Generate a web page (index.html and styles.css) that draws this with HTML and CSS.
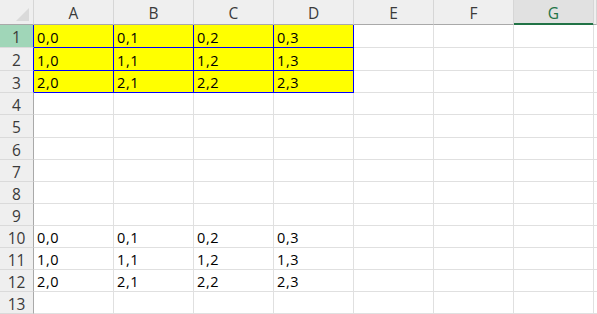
FILE: index.html
```html
<!DOCTYPE html>
<html lang="en">
<head>
    <meta charset="UTF-8">
    <meta name="viewport" content="width=device-width, initial-scale=1.0">
    <title>Sheet1</title>
    <link rel="stylesheet" href="styles.css">
</head>
<body>
    <div class="sheet">
        <div class="row head">
            <div class="corner">
                <svg width="14" height="14" viewBox="0 0 14 14"><polygon points="0,14 13,1 13,14" fill="#dadada"/></svg>
            </div>
            <div class="col">A</div>
            <div class="col">B</div>
            <div class="col">C</div>
            <div class="col">D</div>
            <div class="col">E</div>
            <div class="col">F</div>
            <div class="col sel">G</div>
            <div class="col"></div>
        </div>

        <!-- highlighted block -->
        <div class="row tall">
            <div class="num active edge">1</div>
            <div class="cell hl">0,0</div><div class="cell hl">0,1</div><div class="cell hl">0,2</div><div class="cell hl">0,3</div>
            <div class="cell"></div><div class="cell"></div><div class="cell"></div><div class="cell"></div>
        </div>
        <div class="row tall">
            <div class="num edge">2</div>
            <div class="cell hl">1,0</div><div class="cell hl">1,1</div><div class="cell hl">1,2</div><div class="cell hl">1,3</div>
            <div class="cell"></div><div class="cell"></div><div class="cell"></div><div class="cell"></div>
        </div>
        <div class="row">
            <div class="num edge">3</div>
            <div class="cell hl">2,0</div><div class="cell hl">2,1</div><div class="cell hl">2,2</div><div class="cell hl">2,3</div>
            <div class="cell"></div><div class="cell"></div><div class="cell"></div><div class="cell"></div>
        </div>

        <!-- empty rows -->
        <div class="row">
            <div class="num">4</div>
            <div class="cell"></div><div class="cell"></div><div class="cell"></div><div class="cell"></div>
            <div class="cell"></div><div class="cell"></div><div class="cell"></div><div class="cell"></div>
        </div>
        <div class="row tall">
            <div class="num">5</div>
            <div class="cell"></div><div class="cell"></div><div class="cell"></div><div class="cell"></div>
            <div class="cell"></div><div class="cell"></div><div class="cell"></div><div class="cell"></div>
        </div>
        <div class="row">
            <div class="num">6</div>
            <div class="cell"></div><div class="cell"></div><div class="cell"></div><div class="cell"></div>
            <div class="cell"></div><div class="cell"></div><div class="cell"></div><div class="cell"></div>
        </div>
        <div class="row">
            <div class="num">7</div>
            <div class="cell"></div><div class="cell"></div><div class="cell"></div><div class="cell"></div>
            <div class="cell"></div><div class="cell"></div><div class="cell"></div><div class="cell"></div>
        </div>
        <div class="row">
            <div class="num">8</div>
            <div class="cell"></div><div class="cell"></div><div class="cell"></div><div class="cell"></div>
            <div class="cell"></div><div class="cell"></div><div class="cell"></div><div class="cell"></div>
        </div>
        <div class="row">
            <div class="num">9</div>
            <div class="cell"></div><div class="cell"></div><div class="cell"></div><div class="cell"></div>
            <div class="cell"></div><div class="cell"></div><div class="cell"></div><div class="cell"></div>
        </div>

        <!-- plain copy -->
        <div class="row">
            <div class="num">10</div>
            <div class="cell">0,0</div><div class="cell">0,1</div><div class="cell">0,2</div><div class="cell">0,3</div>
            <div class="cell"></div><div class="cell"></div><div class="cell"></div><div class="cell"></div>
        </div>
        <div class="row">
            <div class="num">11</div>
            <div class="cell">1,0</div><div class="cell">1,1</div><div class="cell">1,2</div><div class="cell">1,3</div>
            <div class="cell"></div><div class="cell"></div><div class="cell"></div><div class="cell"></div>
        </div>
        <div class="row">
            <div class="num">12</div>
            <div class="cell">2,0</div><div class="cell">2,1</div><div class="cell">2,2</div><div class="cell">2,3</div>
            <div class="cell"></div><div class="cell"></div><div class="cell"></div><div class="cell"></div>
        </div>
        <div class="row">
            <div class="num">13</div>
            <div class="cell"></div><div class="cell"></div><div class="cell"></div><div class="cell"></div>
            <div class="cell"></div><div class="cell"></div><div class="cell"></div><div class="cell"></div>
        </div>
    </div>
</body>
</html>
```

FILE: styles.css
```css
body {
    margin: 0;
    padding: 0;
    background-color: #ffffff;
    font-family: 'Open Sans', 'Liberation Sans', sans-serif;
    overflow: hidden;
}
.sheet {
    width: 597px;
}
.row {
    display: grid;
    grid-template-columns: 34px repeat(7, 80px) 1fr;
    height: 22px;
}
.row.tall {
    height: 23px;
}
.row.head {
    height: 25px;
}
.row > div {
    box-sizing: border-box;
    overflow: hidden;
    white-space: nowrap;
}
.corner {
    background-color: #efefef;
    border-right: 1px solid #d6d6d6;
    border-bottom: 1px solid #a9a9a9;
    display: flex;
    justify-content: flex-end;
    align-items: flex-end;
    padding: 0 3px 3px 0;
}
.col {
    background-color: #efefef;
    border-right: 1px solid #d6d6d6;
    border-bottom: 1px solid #a9a9a9;
    color: #3a3a3a;
    font-size: 15.5px;
    display: flex;
    align-items: center;
    justify-content: center;
    padding-top: 2px;
}
.col.sel {
    background-color: #e1e1e1;
    color: #217346;
    border-bottom-color: #217346;
    box-shadow: inset 0 -1px 0 #217346;
}
.num {
    background-color: #efefef;
    border-right: 1px solid #a9a9a9;
    border-bottom: 1px solid #dadada;
    color: #3a3a3a;
    font-size: 15.5px;
    display: flex;
    align-items: center;
    justify-content: center;
    padding-top: 2px;
}
.num.active {
    background-color: #a0d6b8;
}
.num.edge {
    border-right-color: #0000ff;
}
.cell {
    border-right: 1px solid #e0e0e0;
    border-bottom: 1px solid #e0e0e0;
    color: #000000;
    font-size: 14.5px;
    letter-spacing: 0.6px;
    display: flex;
    align-items: center;
    padding: 2px 0 0 3px;
}
.cell.hl {
    background-color: #ffff00;
    border-right-color: #0000ff;
    border-bottom-color: #0000ff;
}
```
